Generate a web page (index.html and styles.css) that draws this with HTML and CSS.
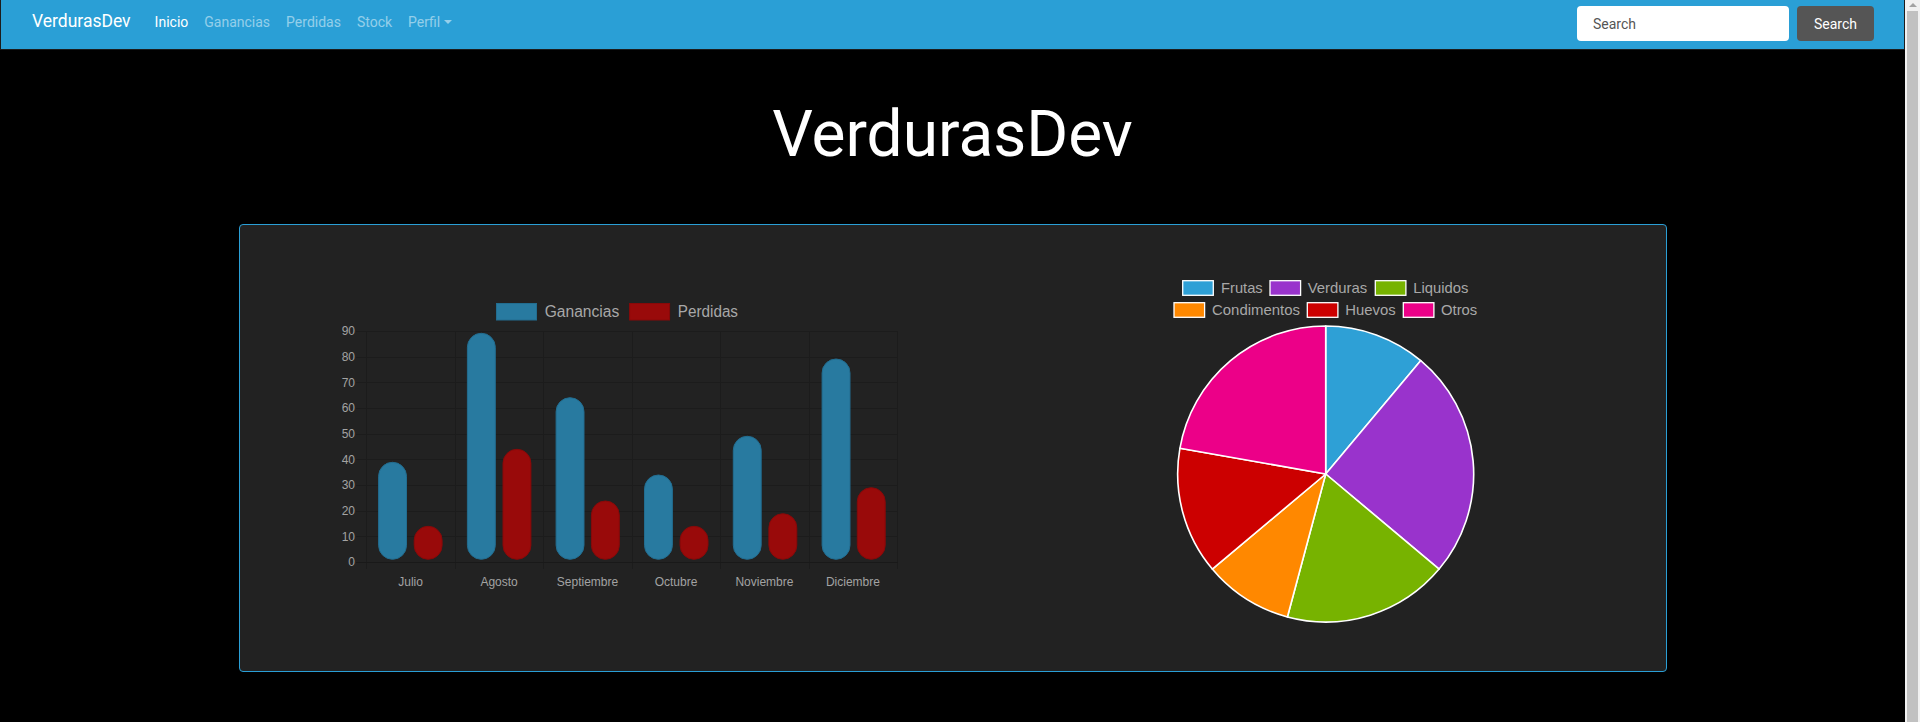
FILE: index.html
```html
<!DOCTYPE html>
<html lang="es">
<head>
<meta charset="utf-8">
<title>VerdurasDev</title>
<link rel="stylesheet" href="styles.css">
</head>
<body>
<div class="page">
  <div class="main">
    <nav class="navbar">
      <div class="nav-left">
        <a class="brand" href="#">VerdurasDev</a>
        <a class="nav-link active" href="#">Inicio</a>
        <a class="nav-link" href="#">Ganancias</a>
        <a class="nav-link" href="#">Perdidas</a>
        <a class="nav-link" href="#">Stock</a>
        <a class="nav-link dropdown" href="#">Perfil<span class="caret"></span></a>
      </div>
      <form class="search">
        <input class="search-input" type="text" placeholder="Search">
        <button class="search-btn" type="button">Search</button>
      </form>
    </nav>

    <h1 class="title">VerdurasDev</h1>

    <section class="card">
      <svg class="chart" width="713" height="446" viewBox="0 0 713 446">
        <g class="grid">
          <line x1="126.5" y1="106" x2="126.5" y2="344"/>
          <line x1="215.5" y1="106" x2="215.5" y2="344"/>
          <line x1="303.5" y1="106" x2="303.5" y2="344"/>
          <line x1="392.5" y1="106" x2="392.5" y2="344"/>
          <line x1="480.5" y1="106" x2="480.5" y2="344"/>
          <line x1="569.5" y1="106" x2="569.5" y2="344"/>
          <line x1="657.5" y1="106" x2="657.5" y2="344"/>
          <line x1="116" y1="106.5" x2="658" y2="106.5"/>
          <line x1="116" y1="132.5" x2="658" y2="132.5"/>
          <line x1="116" y1="157.5" x2="658" y2="157.5"/>
          <line x1="116" y1="183.5" x2="658" y2="183.5"/>
          <line x1="116" y1="209.5" x2="658" y2="209.5"/>
          <line x1="116" y1="234.5" x2="658" y2="234.5"/>
          <line x1="116" y1="260.5" x2="658" y2="260.5"/>
          <line x1="116" y1="286.5" x2="658" y2="286.5"/>
          <line x1="116" y1="311.5" x2="658" y2="311.5"/>
          <line class="zero" x1="116" y1="337.5" x2="658" y2="337.5"/>
        </g>
        <g class="ylabels">
          <text x="115" y="110.3">90</text>
          <text x="115" y="136">80</text>
          <text x="115" y="161.6">70</text>
          <text x="115" y="187.3">60</text>
          <text x="115" y="213">50</text>
          <text x="115" y="238.6">40</text>
          <text x="115" y="264.3">30</text>
          <text x="115" y="290">20</text>
          <text x="115" y="315.6">10</text>
          <text x="115" y="341.3">0</text>
        </g>
        <g class="xlabels">
          <text x="170.6" y="360.7">Julio</text>
          <text x="259.1" y="360.7">Agosto</text>
          <text x="347.5" y="360.7">Septiembre</text>
          <text x="436" y="360.7">Octubre</text>
          <text x="524.4" y="360.7">Noviembre</text>
          <text x="612.9" y="360.7">Diciembre</text>
        </g>
        <g class="bars-g">
          <rect x="138.6" y="237.3" width="27.9" height="97" rx="13.95"/>
          <rect x="227.4" y="108.3" width="27.9" height="226" rx="13.95"/>
          <rect x="316.1" y="172.7" width="27.9" height="161.6" rx="13.95"/>
          <rect x="404.5" y="250" width="27.9" height="84.3" rx="13.95"/>
          <rect x="493.3" y="211.3" width="27.9" height="123" rx="13.95"/>
          <rect x="582.1" y="134" width="27.9" height="200.3" rx="13.95"/>
        </g>
        <g class="bars-p">
          <rect x="174.2" y="301.3" width="27.9" height="33" rx="13.95"/>
          <rect x="263" y="224.3" width="27.9" height="110" rx="13.95"/>
          <rect x="351.4" y="276" width="27.9" height="58.3" rx="13.95"/>
          <rect x="440.1" y="301.3" width="27.9" height="33" rx="13.95"/>
          <rect x="528.9" y="288.7" width="27.9" height="45.6" rx="13.95"/>
          <rect x="617.3" y="262.7" width="27.9" height="71.6" rx="13.95"/>
        </g>
        <g class="legend">
          <rect class="lg-g" x="256.5" y="78.5" width="40" height="16.5"/>
          <text x="304.7" y="91.7" textLength="74.6" lengthAdjust="spacingAndGlyphs">Ganancias</text>
          <rect class="lg-p" x="389.6" y="78.5" width="40" height="16.5"/>
          <text x="437.8" y="91.7" textLength="60.2" lengthAdjust="spacingAndGlyphs">Perdidas</text>
        </g>
      </svg>

      <svg class="chart" width="713" height="446" viewBox="0 0 713 446">
        <g class="pie-legend">
          <rect class="c-frutas" x="229.7" y="55.7" width="30.6" height="14.6"/>
          <text x="268" y="67.7" textLength="41.7" lengthAdjust="spacingAndGlyphs">Frutas</text>
          <rect class="c-verduras" x="317" y="55.7" width="30.6" height="14.6"/>
          <text x="354.7" y="67.7" textLength="59.6" lengthAdjust="spacingAndGlyphs">Verduras</text>
          <rect class="c-liquidos" x="422.3" y="55.7" width="30.6" height="14.6"/>
          <text x="460.3" y="67.7" textLength="55" lengthAdjust="spacingAndGlyphs">Liquidos</text>
          <rect class="c-condimentos" x="221" y="77.7" width="30.6" height="14.6"/>
          <text x="259" y="90" textLength="88" lengthAdjust="spacingAndGlyphs">Condimentos</text>
          <rect class="c-huevos" x="354.3" y="77.7" width="30.6" height="14.6"/>
          <text x="392.3" y="90" textLength="50.4" lengthAdjust="spacingAndGlyphs">Huevos</text>
          <rect class="c-otros" x="450.3" y="77.7" width="30.6" height="14.6"/>
          <text x="488" y="90" textLength="36.3" lengthAdjust="spacingAndGlyphs">Otros</text>
        </g>
        <g class="pie">
          <path class="c-frutas" d="M372.7 249 L372.7 101 A148 148 0 0 1 467.8 135.6 Z"/>
          <path class="c-verduras" d="M372.7 249 L467.8 135.6 A148 148 0 0 1 486.1 344.1 Z"/>
          <path class="c-liquidos" d="M372.7 249 L486.1 344.1 A148 148 0 0 1 334.4 392 Z"/>
          <path class="c-condimentos" d="M372.7 249 L334.4 392 A148 148 0 0 1 259.3 344.1 Z"/>
          <path class="c-huevos" d="M372.7 249 L259.3 344.1 A148 148 0 0 1 226.9 223.3 Z"/>
          <path class="c-otros" d="M372.7 249 L226.9 223.3 A148 148 0 0 1 372.7 101 Z"/>
        </g>
      </svg>
    </section>
  </div>
  <div class="scrollbar">
    <div class="sb-button"><span class="sb-arrow"></span></div>
    <div class="sb-thumb"></div>
  </div>
</div>
</body>
</html>
```

FILE: styles.css
```css
html, body {
  margin: 0;
  padding: 0;
  height: 722px;
  overflow: hidden;
  background: #000;
}

body {
  font-family: Roboto, "Noto Sans", sans-serif;
  color: #adafae;
}

.page {
  display: flex;
  height: 722px;
}

.main {
  flex: 1;
  min-width: 0;
}

/* Navbar */
.navbar {
  display: flex;
  align-items: flex-start;
  height: 49px;
  background: #2a9fd6;
  border: 1px solid #1c1c1c;
  border-top: 0;
  padding: 0 30px 0 31px;
}

.nav-left {
  display: flex;
  align-items: baseline;
  margin-top: 11px;
}

.brand {
  font-size: 17.5px;
  line-height: 20px;
  color: #fff;
  text-decoration: none;
  margin-right: 16px;
}

.nav-link {
  font-size: 14px;
  line-height: 20px;
  padding: 0 8px;
  color: rgba(255, 255, 255, 0.5);
  text-decoration: none;
}

.nav-link.active {
  color: #fff;
}

.caret {
  display: inline-block;
  margin-left: 4px;
  vertical-align: 3px;
  border-top: 4px solid rgba(255, 255, 255, 0.5);
  border-left: 4px solid transparent;
  border-right: 4px solid transparent;
}

.search {
  display: flex;
  margin: 6px 0 0 auto;
}

.search-input {
  box-sizing: border-box;
  width: 212px;
  height: 35px;
  border: 0;
  border-radius: 4px;
  padding: 0 16px;
  margin-right: 8px;
  font-family: Roboto, sans-serif;
  font-size: 14px;
  color: #333;
  background: #fff;
  outline: none;
}

.search-input::placeholder {
  color: #555;
}

.search-btn {
  width: 77px;
  height: 35px;
  border: 0;
  border-radius: 4px;
  background: #555;
  color: #fff;
  font-family: Roboto, sans-serif;
  font-size: 14px;
  padding: 0;
}

/* Title */
.title {
  margin: 47px 0 50px;
  font-family: Roboto, sans-serif;
  font-size: 64px;
  font-weight: 400;
  line-height: 1.2;
  color: #fff;
  text-align: center;
}

/* Card */
.card {
  box-sizing: border-box;
  width: 1428px;
  height: 448px;
  margin: 0 auto;
  display: flex;
  background: #222;
  border: 1px solid #2a9fd6;
  border-radius: 4px;
}

.chart {
  display: block;
  flex: none;
  font-family: "Liberation Sans", Arial, sans-serif;
}

.grid line {
  stroke: #1c1c1c;
  stroke-width: 1;
  shape-rendering: crispEdges;
}

.grid .zero {
  stroke: #191919;
}

.ylabels text {
  font-size: 12px;
  fill: #a3a3a3;
  text-anchor: end;
}

.xlabels text {
  font-size: 12px;
  fill: #a3a3a3;
  text-anchor: middle;
}

.bars-g rect, .lg-g {
  fill: #287aa0;
  stroke: #226d90;
  stroke-width: 1;
}

.bars-p rect, .lg-p {
  fill: #990a0a;
  stroke: #880909;
  stroke-width: 1;
}

.legend text {
  font-size: 16px;
  fill: #a8a8a8;
}

.pie-legend text {
  font-size: 15px;
  fill: #a8a8a8;
}

.pie-legend rect {
  stroke: #fff;
  stroke-width: 1.3;
}

.pie path {
  stroke: #fff;
  stroke-width: 1.6;
  stroke-linejoin: round;
}

.c-frutas { fill: #2ea0d6; }
.c-verduras { fill: #9933cc; }
.c-liquidos { fill: #77b300; }
.c-condimentos { fill: #ff8800; }
.c-huevos { fill: #cc0000; }
.c-otros { fill: #ec0088; }

/* Scrollbar strip */
.scrollbar {
  width: 15px;
  flex: none;
  display: flex;
  flex-direction: column;
  background: #f1f1f1;
}

.sb-button {
  height: 11px;
  display: flex;
  justify-content: center;
  padding-top: 3px;
  box-sizing: border-box;
}

.sb-arrow {
  width: 0;
  height: 0;
  border-bottom: 4px solid #a3a3a3;
  border-left: 4px solid transparent;
  border-right: 4px solid transparent;
}

.sb-thumb {
  flex: 1;
  margin: 0 2px;
  background: #c1c1c1;
}
```
